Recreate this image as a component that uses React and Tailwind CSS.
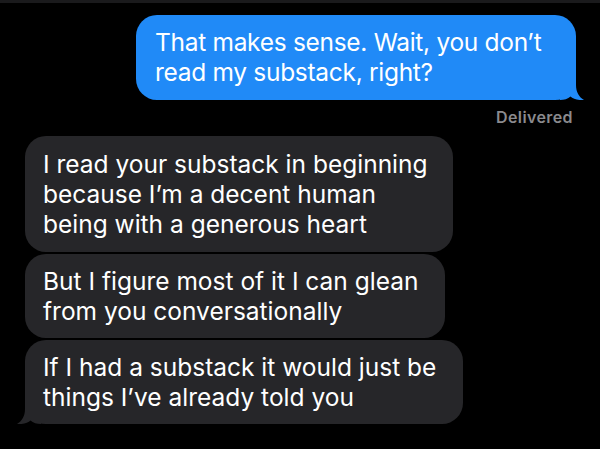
import React from "react";

function BlueTail() {
  return (
    <svg className="absolute right-[-8px] bottom-0" width="24" height="24" viewBox="0 0 24 24">
      <path d="M0,0 L16,0 L16,9 C16,16 19,21 24,24 C18,24.5 13,23 10.5,20.5 C8,23 4,24 0,24 Z" fill="#208AF7" />
    </svg>
  );
}

function GrayTail() {
  return (
    <svg className="absolute left-[-8px] bottom-0" width="24" height="24" viewBox="0 0 24 24">
      <path d="M24,0 L8,0 L8,9 C8,16 5,21 0,24 C6,24.5 11,23 13.5,20.5 C16,23 20,24 24,24 Z" fill="#262629" />
    </svg>
  );
}

export default function App() {
  return (
    <div
      className="w-[600px] h-[449px] bg-black flex flex-col overflow-hidden text-white"
      style={{ fontFamily: "Inter, 'Noto Sans', sans-serif" }}
    >
      <div className="h-[3px] bg-[#1a1a1c]" />
      <div className="mt-[12px] self-end mr-[24px] relative w-[440px] h-[85px] rounded-[21px] bg-[#208AF7] pl-[19px] pt-[12px] text-[24.5px] leading-[30px] tracking-[-0.3px]">
        <span className="relative z-10">
          That makes sense. Wait, you don’t
          <br />
          read my substack, right?
        </span>
        <BlueTail />
      </div>
      <div className="self-end mr-[27px] mt-[7px] text-[16px] leading-[20px] font-semibold tracking-[0.4px] text-[#8a8a8e]">
        Delivered
      </div>
      <div className="mt-[9px] ml-[25px] flex flex-col gap-[2px]">
        <div className="w-[428px] h-[116px] rounded-[21px] bg-[#262629] pl-[18px] pt-[13px] text-[24.5px] leading-[30px]">
          I read your substack in beginning
          <br />
          because I’m a decent human
          <br />
          being with a generous heart
        </div>
        <div className="w-[420px] h-[84px] rounded-[21px] bg-[#262629] pl-[18px] pt-[12px] text-[24.5px] leading-[30px]">
          But I figure most of it I can glean
          <br />
          from you conversationally
        </div>
        <div className="relative w-[438px] h-[84px] rounded-[21px] bg-[#262629] pl-[18px] pt-[12px] text-[24.5px] leading-[30px]">
          <span className="relative z-10">
            If I had a substack it would just be
            <br />
            things I’ve already told you
          </span>
          <GrayTail />
        </div>
      </div>
    </div>
  );
}
